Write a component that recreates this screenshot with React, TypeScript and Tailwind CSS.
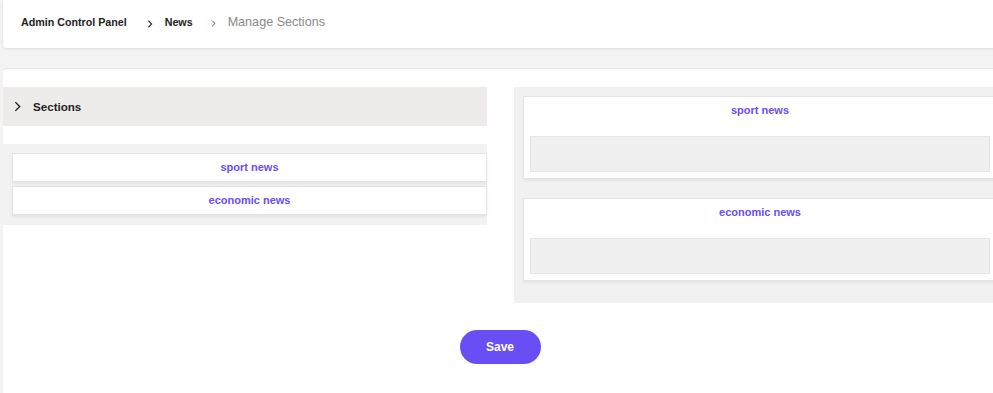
import React from "react";

function Chev({ className }: { className?: string }) {
  return (
    <svg className={className} viewBox="0 0 8 12" fill="none" stroke="currentColor" strokeWidth="1.6">
      <polyline points="1.5,1 6.5,6 1.5,11" />
    </svg>
  );
}

function ListItem({ label }: { label: string }) {
  return (
    <div className="h-[29px] bg-white border border-[#e3e3e3] shadow-[0_2px_3px_rgba(0,0,0,0.06)] flex items-center justify-center text-[11px] font-bold text-[#6b4cf6]">
      {label}
    </div>
  );
}

function RightCard({ label }: { label: string }) {
  return (
    <div className="h-[83px] bg-white border border-[#e3e3e3] shadow-[0_2px_3px_rgba(0,0,0,0.05)] px-[6px] pt-[6px]">
      <div className="text-center text-[11px] font-bold text-[#6b4cf6] leading-[14px]">{label}</div>
      <div className="mt-[19px] h-[36px] bg-[#f0f0f0] border border-[#e6e6e6]" />
    </div>
  );
}

export default function App() {
  return (
    <div
      className="w-[993px] h-[393px] overflow-hidden bg-[#f3f3f3] text-[#222]"
      style={{ fontFamily: '"Liberation Sans", Arial, sans-serif' }}
    >
      <div className="ml-[3px] w-[1000px] h-[48px] bg-white rounded-bl-[4px] shadow-[0_1px_3px_rgba(0,0,0,0.1)] flex items-center pl-[18px] pb-[3px]">
        <span className="text-[10.7px] font-bold text-[#222]">Admin Control Panel</span>
        <Chev className="w-[6px] h-[8px] ml-[20px] text-[#222] mt-[2px]" />
        <span className="ml-[12px] text-[10.7px] font-bold text-[#222]">News</span>
        <Chev className="w-[5px] h-[7px] ml-[18px] text-[#445] mt-[2px]" />
        <span className="ml-[12px] text-[12.6px] text-[#8a8a8a]">Manage Sections</span>
      </div>

      <div className="mt-[20px] ml-[3px] w-[994px] h-[400px] bg-white rounded-tl-[4px] border-t border-[#e6e6e6] pt-[18px]">
        <div className="flex gap-[27px]">
          <div className="w-[484px] shrink-0">
            <div className="h-[39px] bg-[#edecea] flex items-center pl-[11px]">
              <Chev className="w-[7px] h-[11px] text-[#222]" />
              <span className="ml-[12px] text-[11.6px] font-bold text-[#222]">Sections</span>
            </div>
            <div className="mt-[18px] bg-[#f2f2f2] pl-[9px] pt-[9px] pb-[10px] flex flex-col gap-[4px]">
              <ListItem label="sport news" />
              <ListItem label="economic news" />
            </div>
          </div>
          <div className="w-[492px] shrink-0 bg-[#f1f1f1] pl-[9px] pr-[9px] pt-[9px] pb-[22px] flex flex-col gap-[19px]">
            <RightCard label="sport news" />
            <RightCard label="economic news" />
          </div>
        </div>
        <div className="flex justify-center mt-[27px]">
          <button className="w-[81px] h-[34px] rounded-full bg-[#6a4ef5] text-white text-[12px] font-bold">
            Save
          </button>
        </div>
      </div>
    </div>
  );
}
